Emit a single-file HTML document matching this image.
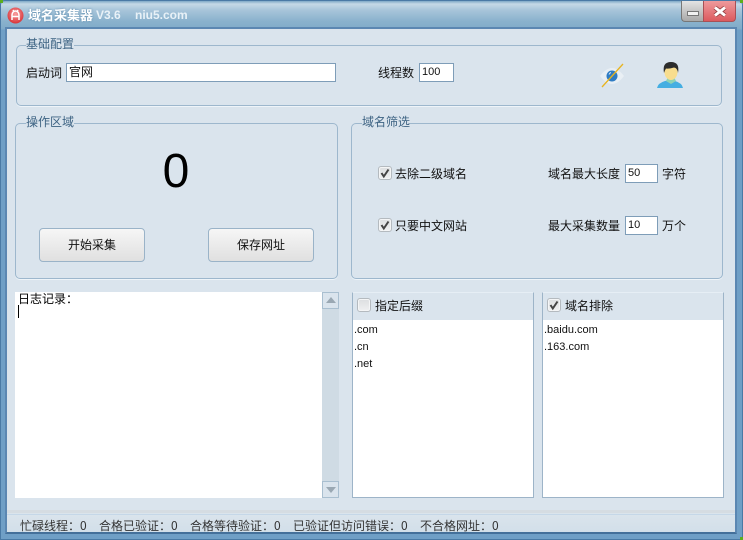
<!DOCTYPE html>
<html><head><meta charset="utf-8">
<style>
html,body{margin:0;padding:0;width:743px;height:540px;overflow:hidden;background:#6f9fc6}
body{position:relative;font:12px "WenQuanYi Zen Hei","Noto Sans CJK SC",sans-serif;color:#111}
div,span,svg{position:absolute;box-sizing:border-box}
.t{white-space:nowrap;line-height:14px;height:14px}
.win{left:0;top:0;width:743px;height:540px;border:1px solid #4a7aa5;border-radius:5px 5px 0 0;background:linear-gradient(#7fa9c7 0,#c5d9e6 3px,#a8c5da 9px,#8ab2cd 20px,#80abc9 28px,#6f9fc6 29px)}
.client{left:5px;top:27px;width:732px;height:507px;border:2px solid #5b87b2;border-bottom:2px solid #44709a;background:#dae4ed}
.grp{border:1px solid #9db7cd;border-radius:5px;box-shadow:0 1px 0 #eef4f9}
.leg{color:#3d6383;background:#dae4ed;padding:0}
.inp{background:#fff;border:1px solid #7e9db8;height:19px;font-size:12px;line-height:16px;padding-left:2px;color:#111}
.num{font:11px "Liberation Sans",sans-serif;line-height:16px;color:#111}
.btn{width:106px;height:34px;border:1px solid #9ab3c8;border-radius:4px;background:linear-gradient(#f6f6f6,#e0e0e0);text-align:center;line-height:32px;color:#111}
.cb{width:14px;height:14px;border:1px solid #b4babf;border-radius:3px;background:linear-gradient(#dcdee0,#eff0f1);box-shadow:inset 0 0 0 1px #f4f5f6}
.pn{width:182px;height:206px;background:#fff;border:1px solid #9db4c8;border-top:1px solid #e6eef5}
.ph{left:0;top:0;width:180px;height:27px;background:#dae4ed}
.li{font:11px "Liberation Sans",sans-serif;line-height:13px;left:1px;color:#111;white-space:nowrap}
.st{top:519px;color:#333;white-space:nowrap;line-height:14px}
.corner{width:3px;height:3px;background:#5cae1e}
</style></head>
<body>
<div class="win"></div>
<div class="corner" style="left:0;top:0"></div>
<div class="corner" style="left:740px;top:537px"></div>
<div class="corner" style="left:740px;top:0"></div>

<svg style="left:7px;top:7px" width="17" height="17" viewBox="0 0 17 17">
<defs><radialGradient id="r" cx=".5" cy=".4" r=".6"><stop offset="0" stop-color="#f9a0a0"/><stop offset="1" stop-color="#d83438"/></radialGradient></defs>
<circle cx="8.5" cy="8.5" r="8" fill="url(#r)"/>
<path d="M5 13V8a3.5 4 0 0 1 7 0v5M5.5 9.5h6M7 4.5 6 3M10 4.5 11 3" fill="none" stroke="#fff" stroke-width="1.5"/>
</svg>
<div class="t" style="left:28px;top:8px;font-weight:bold;font-size:13px;color:#fff;text-shadow:0 0 2px #5d8bac">域名采集器</div>
<div class="t" style="left:96px;top:8px;font:bold 12px/14px 'Liberation Sans',sans-serif;color:#e8f1f7">V3.6</div>
<div class="t" style="left:135px;top:8px;font:bold 12px/14px 'Liberation Sans',sans-serif;color:#e8f1f7">niu5.com</div>

<div style="left:681px;top:1px;width:23px;height:21px;background:linear-gradient(#e3e3e3,#a9a9a9);border:1px solid #777;border-top:0;border-right:0;border-radius:0 0 0 4px"></div>
<div style="left:687px;top:11px;width:12px;height:5px;background:#f2f2f2;border:1px solid #777"></div>
<div style="left:703px;top:1px;width:33px;height:21px;background:linear-gradient(#ee9a9c,#dc5a5e);border:1px solid #a85055;border-top:0;border-radius:0 0 4px 0"></div>
<svg style="left:713px;top:6px" width="14" height="11" viewBox="0 0 14 11"><path d="M2 1.5l10 8M12 1.5l-10 8" stroke="#8c3a3c" stroke-width="4.4"/><path d="M2 1.5l10 8M12 1.5l-10 8" stroke="#fff" stroke-width="3"/></svg>

<div class="client"></div>

<!-- group 1 -->
<div class="grp" style="left:16px;top:45px;width:706px;height:61px"></div>
<div class="t leg" style="left:26px;top:37px">基础配置</div>
<div class="t" style="left:26px;top:66px">启动词</div>
<div class="inp" style="left:66px;top:63px;width:270px">官网</div>
<div class="t" style="left:378px;top:66px">线程数</div>
<div class="inp num" style="left:419px;top:63px;width:35px">100</div>

<svg style="left:598px;top:62px" width="28" height="28" viewBox="0 0 28 28">
<path d="M2 14Q14 -2 26 14Q14 30 2 14Z" fill="#e9eff4"/>
<circle cx="14" cy="14" r="5.5" fill="#2f7cc4"/>
<path d="M11 12.5a3.5 3.5 0 0 1 2-2" stroke="#d5e6f5" stroke-width="1" fill="none"/>
<path d="M4 25 25 2" stroke="#e8b420" stroke-width="1.3"/>
</svg>
<svg style="left:657px;top:61px" width="26" height="28" viewBox="0 0 26 28">
<path d="M0 27Q1 22 8 20L13 19 18 20Q25 22 26 27Z" fill="#45aee2"/>
<path d="M9 20 14 23 19 20 17 16H11Z" fill="#8fd3b4"/>
<ellipse cx="14" cy="11" rx="6.5" ry="8" fill="#f8dd8e"/>
<path d="M7 12Q5 1 14 1Q23 1 21 12Q20.500 7 17 6.500Q12 8 9 7.500Q8 9 7 12Z" fill="#2c2c2c"/>
</svg>

<!-- group 2 -->
<div class="grp" style="left:15px;top:123px;width:323px;height:156px"></div>
<div class="t leg" style="left:26px;top:115px">操作区域</div>
<div style="left:126px;top:142px;width:100px;text-align:center;font:48px/60px 'Liberation Sans',sans-serif;color:#000">0</div>
<div class="btn" style="left:39px;top:228px">开始采集</div>
<div class="btn" style="left:208px;top:228px">保存网址</div>

<!-- group 3 -->
<div class="grp" style="left:351px;top:123px;width:372px;height:156px"></div>
<div class="t leg" style="left:362px;top:115px">域名筛选</div>
<div class="cb" style="left:378px;top:166px"></div>
<svg style="left:378px;top:166px" width="14" height="14" viewBox="0 0 14 14"><path d="M3.500 7 5.800 10.500 10.500 3.500" fill="none" stroke="#444" stroke-width="2"/></svg>
<div class="t" style="left:395px;top:167px">去除二级域名</div>
<div class="cb" style="left:378px;top:218px"></div>
<svg style="left:378px;top:218px" width="14" height="14" viewBox="0 0 14 14"><path d="M3.500 7 5.800 10.500 10.500 3.500" fill="none" stroke="#444" stroke-width="2"/></svg>
<div class="t" style="left:395px;top:219px">只要中文网站</div>
<div class="t" style="left:548px;top:167px">域名最大长度</div>
<div class="inp num" style="left:625px;top:164px;width:33px">50</div>
<div class="t" style="left:662px;top:167px">字符</div>
<div class="t" style="left:548px;top:219px">最大采集数量</div>
<div class="inp num" style="left:625px;top:216px;width:33px">10</div>
<div class="t" style="left:662px;top:219px">万个</div>

<!-- log -->
<div style="left:15px;top:292px;width:307px;height:206px;background:#fff"></div>
<div class="t" style="left:18px;top:292px;color:#000">日志记录：</div>
<div style="left:18px;top:305px;width:1px;height:13px;background:#000"></div>
<div style="left:322px;top:292px;width:17px;height:206px;background:#cfdbe4"></div>
<div style="left:322px;top:292px;width:17px;height:17px;background:#dae4ed;border:1px solid #a9bfd0"></div>
<svg style="left:326px;top:297px" width="10" height="6"><path d="M0 6 5 0 10 6Z" fill="#9aa8b3"/></svg>
<div style="left:322px;top:481px;width:17px;height:17px;background:#dae4ed;border:1px solid #a9bfd0"></div>
<svg style="left:326px;top:487px" width="10" height="6"><path d="M0 0 5 6 10 0Z" fill="#9aa8b3"/></svg>

<!-- panels -->
<div class="pn" style="left:352px;top:292px">
 <div class="ph"></div>
 <div class="cb" style="left:4px;top:5px"></div>
 <div class="t" style="left:22px;top:6px">指定后缀</div>
 <div class="li" style="top:31px">.com</div>
 <div class="li" style="top:48px">.cn</div>
 <div class="li" style="top:65px">.net</div>
</div>
<div class="pn" style="left:542px;top:292px">
 <div class="ph"></div>
 <div class="cb" style="left:4px;top:5px"></div>
 <svg style="left:4px;top:5px" width="14" height="14" viewBox="0 0 14 14"><path d="M3.500 7 5.800 10.500 10.500 3.500" fill="none" stroke="#444" stroke-width="2"/></svg>
 <div class="t" style="left:22px;top:6px">域名排除</div>
 <div class="li" style="top:31px">.baidu.com</div>
 <div class="li" style="top:48px">.163.com</div>
</div>

<!-- status -->
<div style="left:7px;top:510px;width:728px;height:22px;background:linear-gradient(#dce5ed,#d2dfe9)"></div>
<div style="left:7px;top:510px;width:728px;height:3px;background:#d5dce2"></div>
<div style="left:7px;top:514px;width:728px;height:1px;background:#c5d7e8"></div>
<div class="st" style="left:20px">忙碌线程：0</div>
<div class="st" style="left:99px">合格已验证：0</div>
<div class="st" style="left:190px">合格等待验证：0</div>
<div class="st" style="left:293px">已验证但访问错误：0</div>
<div class="st" style="left:420px">不合格网址：0</div>
</body></html>
